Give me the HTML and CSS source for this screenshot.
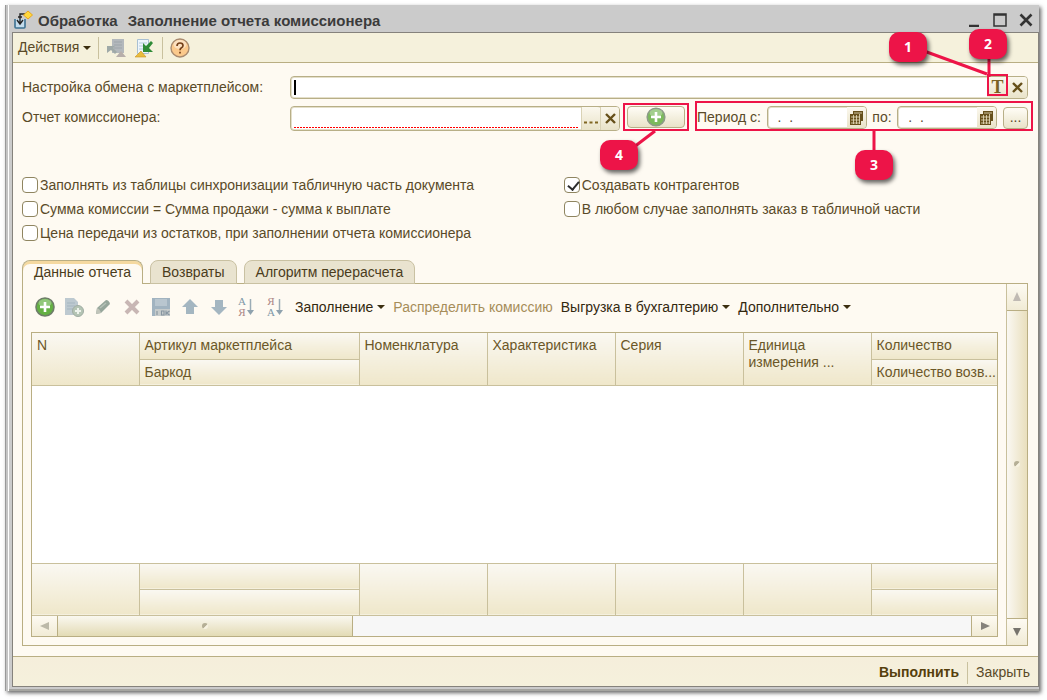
FILE: index.html
```
<!DOCTYPE html>
<html lang="ru">
<head>
    <meta charset="UTF-8">
    <meta name="viewport" content="width=device-width, initial-scale=1.0">
    <title>Обработка Заполнение отчета комиссионера</title>
    <link rel="stylesheet" href="styles.css">
</head>
<body>

<div class="window">
    <header class="titlebar">
        <svg class="app-icon" width="20" height="20" viewBox="0 0 20 20">
            <path d="M2 9v8q0 1 1 1h8q1 0 1-1V9" fill="#c4dcec" stroke="#3d7191" stroke-width="1.6"/>
            <path d="M12 4H7v10M4 10l3 4 3-4M5 7h4" fill="none" stroke="#252525" stroke-width="1.4"/>
            <path d="M15 1l4.500 4-4.500 4-4.500-4z" fill="#ffd83d" stroke="#e6a520"/>
        </svg>
        <h1><span>Обработка</span> <span>Заполнение отчета комиссионера</span></h1>
        <div class="window-buttons">
            <button type="button" aria-label="Свернуть"><svg width="14" height="14" viewBox="0 0 14 14"><path d="M2 13h10" stroke="#333" stroke-width="2.500"/></svg></button>
            <button type="button" aria-label="Развернуть"><svg width="14" height="14" viewBox="0 0 14 14"><path d="M1 1h12v12H1z M1 2h12" fill="none" stroke="#333" stroke-width="1.500"/></svg></button>
            <button type="button" aria-label="Закрыть окно"><svg width="14" height="14" viewBox="0 0 14 14"><path d="M1.500 1.500l11 11M12.500 1.500l-11 11" stroke="#333" stroke-width="2.600"/></svg></button>
        </div>
    </header>

    <div class="content">
        <nav class="toolbar">
            <button type="button" class="menu">Действия</button>
            <span class="separator"></span>
            <button type="button" aria-label="Восстановить значения">
                <svg width="20" height="20" viewBox="0 0 20 20">
                    <path d="M6 1h12v14H6z" fill="#b3b8bc"/><path d="M8 4h8M8 7h8M8 10h8" stroke="#9ea5aa"/>
                    <path d="M1 8h8l-2 2 4 4-2 2-4-4-4 3z" fill="#9fa9a7"/><path d="M10 19l5-6 5 6z" fill="#b7aeaa"/>
                </svg>
            </button>
            <button type="button" class="save" aria-label="Сохранить значения">
                <svg width="20" height="20" viewBox="0 0 20 20">
                    <path d="M3.500 1.500h11v14h-11z" fill="#eef5fb" stroke="#a9c0d3"/><path d="M5 5h8M5 8h6M5 11h6" stroke="#b5cbdc"/>
                    <path d="M17 3l2 2-4 5 4 4H9V5l3 3z" fill="#2f8b37"/><path d="M1 19l6-6 5 6z" fill="#e9bd3f" stroke="#c99322" stroke-width=".6"/>
                </svg>
            </button>
            <span class="separator"></span>
            <button type="button" aria-label="Справка">
                <svg width="20" height="20" viewBox="0 0 20 20">
                    <circle cx="10" cy="10" r="9" fill="#fbc98c" stroke="#a98b70" stroke-width="1.400"/>
                    <ellipse cx="10" cy="6.500" rx="6.500" ry="4.500" fill="#fff" opacity=".45"/>
                    <path d="M7 8q0-3 3-3t3 2.500q0 1.500-1.500 2.300T10 12.300M10 13.800v1.700" fill="none" stroke="#754019" stroke-width="1.700"/>
                </svg>
            </button>
        </nav>

        <main class="form">
            <div class="row">
                <label class="row-label" for="exchange">Настройка обмена с маркетплейсом:</label>
                <div class="field wide">
                    <span class="caret"></span>
                    <input type="text" id="exchange">
                    <div class="marked">
                        <button type="button" class="letter" aria-label="Выбрать тип">T</button>
                        <span class="frame frame-type"></span>
                        <svg class="lines lines-type" width="90" height="50" viewBox="0 0 90 50"><path d="M25 18L88 41M90 12V44" stroke="#ed1448" stroke-width="3" fill="none"/></svg>
                        <span class="marker marker-1">1</span>
                        <span class="marker marker-2">2</span>
                    </div>
                    <button type="button" aria-label="Очистить настройку"><svg width="11" height="11" viewBox="0 0 11 11"><path d="M1 1l9 9M10 1l-9 9" stroke="#66501a" stroke-width="2.400"/></svg></button>
                </div>
            </div>

            <div class="row">
                <label class="row-label" for="report">Отчет комиссионера:</label>
                <div class="field wide required">
                    <input type="text" id="report">
                    <button type="button" class="split" aria-label="Выбрать отчет"><svg width="14" height="12" viewBox="0 0 14 12"><path d="M0 9.500h3M5.500 9.500h3M11 9.500h3" stroke="#806622" stroke-width="2.200"/></svg></button>
                    <button type="button" class="split" aria-label="Очистить отчет"><svg width="11" height="11" viewBox="0 0 11 11"><path d="M1 1l9 9M10 1l-9 9" stroke="#66501a" stroke-width="2.400"/></svg></button>
                </div>
                <div class="marked create">
                    <button type="button" class="push" aria-label="Создать отчет">
                        <svg width="20" height="20" viewBox="0 0 20 20"><circle cx="10" cy="10" r="8.800" fill="#7cba5c" stroke="#8c9b87" stroke-width="1.600"/><ellipse cx="10" cy="6" rx="6.500" ry="4" fill="#fff" opacity=".3"/><path d="M10 5v10M5 10h10" stroke="#fff" stroke-width="2.600"/></svg>
                    </button>
                    <span class="frame frame-create"></span>
                    <svg class="lines lines-create" width="24" height="18" viewBox="0 0 24 18"><path d="M23 1L2 17" stroke="#ed1448" stroke-width="3"/></svg>
                    <span class="marker marker-4">4</span>
                </div>
                <div class="marked period">
                    <label for="date-from">Период с:</label>
                    <div class="field date">
                        <input type="text" id="date-from" value=".  .">
                        <button type="button" aria-label="Календарь начала"><svg width="13" height="14" viewBox="0 0 13 14"><path d="M3 0h10v10h-2v4H0V3h3z" fill="#66501a"/><path d="M1 6h9M1 9h9M1 12h9M3.500 4v9M6.500 4v9M9.500 3v10M4 2h8" stroke="#e8e0c0" stroke-width=".8"/></svg></button>
                    </div>
                    <label for="date-to">по:</label>
                    <div class="field date">
                        <input type="text" id="date-to" value=".  .">
                        <button type="button" aria-label="Календарь конца"><svg width="13" height="14" viewBox="0 0 13 14"><path d="M3 0h10v10h-2v4H0V3h3z" fill="#66501a"/><path d="M1 6h9M1 9h9M1 12h9M3.500 4v9M6.500 4v9M9.500 3v10M4 2h8" stroke="#e8e0c0" stroke-width=".8"/></svg></button>
                    </div>
                    <button type="button" class="push small">...</button>
                    <span class="frame frame-period"></span>
                    <svg class="lines lines-period" width="4" height="22" viewBox="0 0 4 22"><path d="M2 0v22" stroke="#ed1448" stroke-width="3"/></svg>
                    <span class="marker marker-3">3</span>
                </div>
            </div>

            <div class="options">
                <label><input type="checkbox">Заполнять из таблицы синхронизации табличную часть документа</label>
                <label><input type="checkbox" checked>Создавать контрагентов</label>
                <label><input type="checkbox">Сумма комиссии = Сумма продажи - сумма к выплате</label>
                <label><input type="checkbox">В любом случае заполнять заказ в табличной части</label>
                <label><input type="checkbox">Цена передачи из остатков, при заполнении отчета комиссионера</label>
            </div>

            <div class="tabs">
                <button type="button" class="tab active">Данные отчета</button>
                <button type="button" class="tab">Возвраты</button>
                <button type="button" class="tab">Алгоритм перерасчета</button>
            </div>

            <section class="panel">
                <div class="panel-main">
                    <div class="commands">
                        <div class="icons">
                            <button type="button" aria-label="Добавить"><svg width="20" height="20" viewBox="0 0 20 20"><circle cx="10" cy="10" r="9" fill="#64b043" stroke="#6d7d68" stroke-width="1.600"/><ellipse cx="10" cy="6" rx="6.500" ry="4" fill="#fff" opacity=".3"/><path d="M10 5v10M5 10h10" stroke="#fff" stroke-width="2.600"/></svg></button>
                            <button type="button" aria-label="Скопировать"><svg width="20" height="20" viewBox="0 0 20 20"><path d="M1 1h9l4 4v13H1z" fill="#bdc9d0"/><path d="M3 6h8M3 9h8M3 12h6" stroke="#a5b5bf"/><circle cx="14" cy="14" r="5.500" fill="#b4c4b4" stroke="#a0aca3"/><path d="M14 11v6M11 14h6" stroke="#eef3ec" stroke-width="2"/></svg></button>
                            <button type="button" aria-label="Изменить"><svg width="20" height="20" viewBox="0 0 20 20"><path d="M3 17l1-6 9-8q3 0 4 4l-9 9z" fill="#96a69b"/><path d="M3 17l1-6q3 1 4 5z" fill="#c0c4ba"/><path d="M7 11l6-5" stroke="#b6c1b7" stroke-width="1.500"/></svg></button>
                            <button type="button" aria-label="Удалить"><svg width="20" height="20" viewBox="0 0 20 20"><path d="M4 4l12 12M16 4L4 16" stroke="#c8b6b4" stroke-width="4"/></svg></button>
                            <button type="button" aria-label="Записать"><svg width="20" height="20" viewBox="0 0 20 20"><path d="M1 1h18v18H1z" fill="#a1b3c0"/><path d="M4 2h12v7H4z" fill="#b9c6cf"/><path d="M4 12h15v7H4z" fill="#c6cbcb"/><path d="M6 14v4M10.500 14h2.500v4h-2.500zM15 13.500V18M18.500 14l-3 2 3 2" fill="none" stroke="#8795a0" stroke-width="1.100"/></svg></button>
                            <button type="button" aria-label="Вверх"><svg width="20" height="20" viewBox="0 0 20 20"><path d="M10 2l8 8h-4v7H6v-7H2z" fill="#a4b6c1"/></svg></button>
                            <button type="button" aria-label="Вниз"><svg width="20" height="20" viewBox="0 0 20 20"><path d="M10 18l8-8h-4V3H6v7H2z" fill="#a4b6c1"/></svg></button>
                            <button type="button" class="sort" aria-label="По возрастанию"><span class="letters"><b>А</b><i>Я</i></span><svg width="7" height="18" viewBox="0 0 7 18"><path d="M3.500 1v13" stroke="#9bacb6" stroke-width="1.500"/><path d="M0 12h7l-3.500 5z" fill="#8fa2ae"/></svg></button>
                            <button type="button" class="sort" aria-label="По убыванию"><span class="letters"><i>Я</i><b>А</b></span><svg width="7" height="18" viewBox="0 0 7 18"><path d="M3.500 1v13" stroke="#9bacb6" stroke-width="1.500"/><path d="M0 12h7l-3.500 5z" fill="#8fa2ae"/></svg></button>
                        </div>
                        <button type="button" class="menu">Заполнение</button>
                        <button type="button" class="menu plain" disabled>Распределить комиссию</button>
                        <button type="button" class="menu">Выгрузка в бухгалтерию</button>
                        <button type="button" class="menu">Дополнительно</button>
                    </div>

                    <div class="grid">
                        <table>
                            <colgroup>
                                <col class="col-n">
                                <col class="col-article">
                                <col class="col-text">
                                <col class="col-text">
                                <col class="col-text">
                                <col class="col-text">
                                <col>
                            </colgroup>
                            <thead>
                                <tr>
                                    <th rowspan="2">N</th>
                                    <th>Артикул маркетплейса</th>
                                    <th rowspan="2">Номенклатура</th>
                                    <th rowspan="2">Характеристика</th>
                                    <th rowspan="2">Серия</th>
                                    <th rowspan="2">Единица<br>измерения ...</th>
                                    <th>Количество</th>
                                </tr>
                                <tr>
                                    <th>Баркод</th>
                                    <th>Количество возв...</th>
                                </tr>
                            </thead>
                            <tbody>
                                <tr><td colspan="7"></td></tr>
                            </tbody>
                            <tfoot>
                                <tr>
                                    <td rowspan="2"></td>
                                    <td></td>
                                    <td rowspan="2"></td>
                                    <td rowspan="2"></td>
                                    <td rowspan="2"></td>
                                    <td rowspan="2"></td>
                                    <td></td>
                                </tr>
                                <tr>
                                    <td></td>
                                    <td></td>
                                </tr>
                            </tfoot>
                        </table>
                        <div class="scroll-x">
                            <button type="button" aria-label="Влево"><svg width="10" height="10" viewBox="0 0 10 10"><path d="M0 5l9-4v8z" fill="#bcb9a8"/></svg></button>
                            <span class="thumb"><span class="grip"></span></span>
                            <span class="track"></span>
                            <button type="button" aria-label="Вправо"><svg width="10" height="10" viewBox="0 0 10 10"><path d="M10 5L1 1v8z" fill="#85827b"/></svg></button>
                        </div>
                    </div>
                </div>
                <div class="scroll-y">
                    <button type="button" aria-label="Вверх по форме"><svg width="10" height="10" viewBox="0 0 10 10"><path d="M5 0l4 9H1z" fill="#c0bab3"/></svg></button>
                    <span class="thumb"><span class="grip"></span></span>
                    <button type="button" aria-label="Вниз по форме"><svg width="10" height="10" viewBox="0 0 10 10"><path d="M5 9l4-8H1z" fill="#77746d"/></svg></button>
                </div>
            </section>
        </main>

        <footer class="actions">
            <button type="button" class="run">Выполнить</button>
            <span class="separator"></span>
            <button type="button">Закрыть</button>
        </footer>
    </div>
</div>

</body>
</html>
```
FILE: styles.css
```
* {
    box-sizing: border-box;
}

body {
    margin: 0;
    padding: 5px 8px 9px 5px;
    background: #fff;
    font-family: "Liberation Sans", Arial, sans-serif;
    font-size: 14px;
    line-height: 17px;
    color: #5a4a28;
}

button, input {
    margin: 0;
    padding: 0;
    border: none;
    background: none;
    font: inherit;
    color: inherit;
}

svg {
    display: block;
    flex: none;
}

/* Окно */
.window {
    padding-left: 6px;
    padding-bottom: 4px;
    background: #cbcbcb;
    border-left: 1px solid #999;
    box-shadow: inset 2px 0 #c4c4c4, inset 3px 0 #fff, inset 0 -2px #a5a5a0, 2px 2px 4px rgba(0, 0, 0, 0.6);
}

.titlebar {
    display: flex;
    align-items: center;
    gap: 5px;
    height: 27px;
    padding: 3px 6px 0 1px;
}

.titlebar h1 {
    display: flex;
    flex: 1;
    gap: 10px;
    margin: 0;
    font-size: 15px;
    font-weight: bold;
    color: #3b3b3b;
}

.window-buttons {
    display: flex;
    gap: 12px;
}

.content {
    background: #fefaf2;
    border: 1px solid #85827c;
}

/* Верхняя панель */
.toolbar {
    display: flex;
    align-items: center;
    gap: 7px;
    height: 30px;
    padding: 0 5px;
    background: #f5f1dc;
    border-bottom: 1px solid #b9ae83;
}

.save {
    margin: 0 1px;
}

.menu {
    display: flex;
    align-items: center;
    gap: 4px;
    white-space: nowrap;
}

.menu::after {
    content: "";
    border: 4px solid transparent;
    border-top: 4px solid #3c2f10;
    border-bottom: none;
}

.menu.plain::after {
    display: none;
}

.separator {
    width: 1px;
    height: 22px;
    background: #c9c19e;
}

/* Поля */
.form {
    padding: 13px 10px 10px 9px;
}

.row {
    display: flex;
    align-items: flex-start;
    height: 23px;
    margin-bottom: 7px;
}

.row-label {
    flex: none;
    width: 268px;
    line-height: 23px;
}

.field {
    display: flex;
    height: 23px;
    background: #fff;
    border: 1px solid #b8af87;
    border-radius: 4px;
    box-shadow: inset 0 0 0 1px #e4dfca;
}

.field.wide {
    flex: 1;
    min-width: 0;
}

.field input {
    flex: 1;
    min-width: 0;
    outline: none;
}

.field button {
    display: flex;
    align-items: center;
    justify-content: center;
    width: 19px;
    height: 100%;
    background: linear-gradient(#fbf8ee, #e9e3c9);
    border-radius: 0 3px 3px 0;
}

.field .split {
    border-left: 1px solid #d9d2b5;
}

.field .letter {
    width: 21px;
    border-radius: 0;
    font-family: "Liberation Serif", serif;
    font-size: 18px;
    font-weight: bold;
    color: #7a6224;
}

.caret {
    width: 2px;
    margin: 3px 1px 3px 3px;
    background: #000;
}

.required {
    height: 25px;
}

.required input {
    margin: 0 3px 2px;
    background: repeating-linear-gradient(90deg, #f00 0 2px, #fff 2px 3px) bottom / 100% 1px no-repeat;
}

.date {
    width: 100px;
}

.date input {
    padding-left: 10px;
    white-space: pre;
}

.push {
    display: flex;
    align-items: center;
    justify-content: center;
    width: 58px;
    height: 22px;
    background: linear-gradient(#fffdf6, #e9e3c9);
    border: 1px solid #b8af87;
    border-radius: 4px;
}

.push.small {
    width: 25px;
}

.create {
    margin: 0 12px 0 7px;
}

.period {
    display: flex;
    align-items: center;
    justify-content: space-between;
    width: 331px;
}

/* Номера пояснений поверх формы */
.marked {
    position: relative;
}

.frame, .lines, .marker {
    position: absolute;
    pointer-events: none;
}

.frame {
    border: 2px solid #ed1448;
}

.frame-type {
    inset: -3px 0 2px 0;
}

.frame-create {
    inset: -3px -4px -3px -4px;
}

.frame-period {
    inset: -5px -5px -2px -2px;
}

.marker {
    width: 38px;
    height: 30px;
    background: #ed1448;
    border-radius: 10px;
    box-shadow: 2px 3px 4px rgba(0, 0, 0, 0.6);
    font-family: "Open Sans", sans-serif;
    font-weight: bold;
    line-height: 30px;
    text-align: center;
    color: #fff;
}

.marker-1 {
    top: -45px;
    left: -98px;
}

.marker-2 {
    top: -48px;
    left: -18px;
}

.marker-3 {
    top: 44px;
    left: 158px;
}

.marker-4 {
    top: 34px;
    left: -27px;
}

.lines {
    overflow: visible;
}

.lines-type {
    top: -44px;
    left: -88px;
}

.lines-create {
    top: 24px;
    left: 5px;
}

.lines-period {
    top: 24px;
    left: 175px;
}

/* Флажки */
.options {
    display: grid;
    grid-template-columns: 7fr 6fr;
    row-gap: 8px;
    margin: 48px 0 19px;
}

.options label {
    display: flex;
    align-items: center;
    gap: 2px;
    height: 16px;
    white-space: nowrap;
}

.options input {
    appearance: none;
    width: 16px;
    height: 16px;
    background: #fff;
    border: 1px solid #8f8560;
    border-radius: 4px;
}

.options input:checked::before {
    content: "";
    display: block;
    width: 5px;
    height: 9px;
    margin: 1px 0 0 5px;
    border: solid #2c2c2c;
    border-width: 0 2px 2px 0;
    transform: rotate(40deg);
}

/* Закладки */
.tabs {
    display: flex;
    gap: 7px;
    margin-bottom: -1px;
}

.tab {
    height: 24px;
    padding: 0 11px;
    background: #e9e3cf;
    border: 1px solid #c9c1a2;
    border-radius: 8px 8px 0 0;
    color: #4a3c1c;
}

.tab.active {
    position: relative;
    background: #fefaf2;
    border-color: #b9ae83;
    border-bottom: none;
    box-shadow: inset 0 3px #f5d9a0;
}

.panel {
    display: flex;
    border: 1px solid #b9ae83;
}

.panel-main {
    flex: 1;
    min-width: 0;
    padding: 8px;
}

.commands {
    display: flex;
    align-items: center;
    gap: 8px;
    height: 30px;
    margin-bottom: 10px;
    padding-left: 4px;
    color: #33280f;
}

.icons {
    display: flex;
    gap: 9px;
}

.menu:disabled {
    color: #a68d59;
}

.sort {
    display: flex;
    align-items: center;
    gap: 1px;
    width: 20px;
}

.letters {
    display: flex;
    flex-direction: column;
    font-family: "Liberation Serif", serif;
    font-size: 11px;
    line-height: 11px;
}

.letters b {
    font-weight: normal;
    color: #7f98a8;
}

.letters i {
    font-style: normal;
    color: #a98484;
}

/* Таблица */
.grid {
    background: #fff;
    border: 1px solid #b9ae83;
}

table {
    width: 100%;
    table-layout: fixed;
    border-collapse: collapse;
}

.col-n {
    width: 107px;
}

.col-article {
    width: 220px;
}

.col-text {
    width: 128px;
}

th, tfoot td {
    height: 26px;
    padding: 4px 0 4px 5px;
    background: linear-gradient(#faf8f2, #efe7ca);
    border: 1px solid #c9c09c;
    font-weight: normal;
    text-align: left;
    vertical-align: top;
    white-space: nowrap;
    color: #6b5728;
}

tbody td {
    height: 178px;
    padding: 0;
}

thead tr:first-child th {
    border-top: none;
}

thead tr:first-child th:first-child, tfoot tr:first-child td:first-child {
    border-left: none;
}

th:last-child, tfoot td:last-child {
    border-right: none;
}

/* Прокрутка */
.scroll-x {
    display: flex;
    height: 20px;
    background: #f7f7f7;
}

.scroll-x button, .scroll-y button {
    display: flex;
    align-items: center;
    justify-content: center;
    background: linear-gradient(#fdfaf2, #f1ebd5);
}

.scroll-x button {
    width: 26px;
    border-right: 1px solid #b9ae83;
}

.scroll-x button:last-child {
    border-right: none;
    border-left: 1px solid #b9ae83;
}

.thumb {
    display: flex;
    align-items: center;
    justify-content: center;
}

.scroll-x .thumb {
    flex: 295;
    background: linear-gradient(#faf8f0, #e3dbb5);
    border-right: 1px solid #b9ae83;
}

.track {
    flex: 619;
}

.grip {
    width: 6px;
    height: 6px;
    background: linear-gradient(135deg, #b5af96 50%, #f7f2e0 60%);
    border-radius: 50%;
}

.scroll-y {
    display: flex;
    flex-direction: column;
    width: 21px;
    border-left: 1px solid #c9c09c;
}

.scroll-y button {
    height: 26px;
}

.scroll-y .thumb {
    flex: 1;
    background: linear-gradient(90deg, #faf8f2, #e9dfbd);
    border: solid #b9ae83;
    border-width: 1px 0;
}

/* Нижняя панель */
.actions {
    display: flex;
    align-items: center;
    justify-content: flex-end;
    gap: 8px;
    height: 30px;
    padding: 3px 8px 0;
    background: linear-gradient(#f5eedb, #f5f1dc);
    border-top: 1px solid #b9ae83;
}

.run {
    font-weight: bold;
    color: #553f0c;
}
```
